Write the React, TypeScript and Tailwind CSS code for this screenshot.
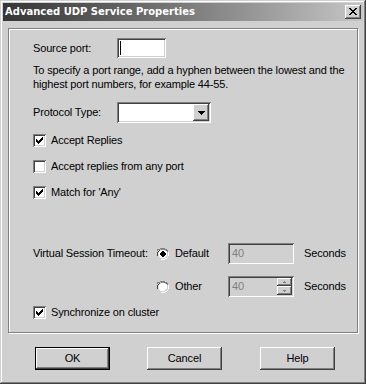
import React from "react";

const raised =
  "shadow-[inset_-1px_-1px_#404040,inset_1px_1px_#ffffff,inset_-2px_-2px_#808080,inset_2px_2px_#d0d0d0]";
const sunken =
  "shadow-[inset_1px_1px_#808080,inset_-1px_-1px_#ffffff,inset_2px_2px_#404040,inset_-2px_-2px_#d0d0d0]";

function CheckBox({ checked }: { checked: boolean }) {
  return (
    <div className={`w-[13px] h-[13px] bg-white shrink-0 relative ${sunken}`}>
      {checked && (
        <svg width="13" height="13" className="absolute left-0 top-0" shapeRendering="crispEdges">
          <rect x="3" y="5" width="1" height="3" fill="#000" />
          <rect x="4" y="6" width="1" height="3" fill="#000" />
          <rect x="5" y="7" width="1" height="3" fill="#000" />
          <rect x="6" y="6" width="1" height="3" fill="#000" />
          <rect x="7" y="5" width="1" height="3" fill="#000" />
          <rect x="8" y="4" width="1" height="3" fill="#000" />
          <rect x="9" y="3" width="1" height="3" fill="#000" />
        </svg>
      )}
    </div>
  );
}

function Radio({ checked }: { checked: boolean }) {
  return (
    <svg width="12" height="12" className="shrink-0" shapeRendering="crispEdges">
      <path d="M4 0h4v1h2v1h1v2h-1v-1h-1v-1h-2v-1h-4v1h-2v1h-1v1h-1v4h-1v-4h1v-2h1v-1h2z" fill="#808080" />
      <path d="M4 1h4v1h2v1h-2v-1h-4v1h-2v1h-1v4h-1v-4h1v-1h1v-1h1z" fill="#404040" />
      <circle cx="6" cy="6" r="4.5" fill="#ffffff" shapeRendering="auto" />
      <path d="M11 4h1v4h-1v2h-1v1h-2v1h-4v-1h4v-1h2v-1h1z" fill="#ffffff" />
      <path d="M10 4h1v4h-1v2h-2v1h-4v-1h4v-1h1v-1h1z" fill="#d0d0d0" />
      {checked && <rect x="4" y="4" width="4" height="4" fill="#000" />}
      {checked && <rect x="5" y="3" width="2" height="6" fill="#000" />}
      {checked && <rect x="3" y="5" width="6" height="2" fill="#000" />}
    </svg>
  );
}

export default function App() {
  const font = "font-['Liberation_Sans',Arial,sans-serif] text-[11px] tracking-[-0.15px] text-black";
  return (
    <div
      className={`w-[366px] h-[384px] bg-[#d0d0d0] p-[3px] flex flex-col ${font} shadow-[inset_-1px_-1px_#404040,inset_1px_1px_#d0d0d0,inset_-2px_-2px_#808080,inset_2px_2px_#ffffff]`}
    >
      {/* Title bar */}
      <div className="h-[18px] flex items-center justify-between pl-[2px] pr-[2px] bg-gradient-to-r from-[#363636] to-[#c6c6c6]">
        <span className="font-['DejaVu_Sans',sans-serif] font-bold text-[10px] tracking-normal text-white leading-none">
          Advanced UDP Service Properties
        </span>
        <div className={`w-[16px] h-[14px] bg-[#d0d0d0] relative ${raised}`}>
          <svg width="16" height="14" className="absolute left-0 top-0" shapeRendering="crispEdges">
            <rect x="4" y="3" width="2" height="1" fill="#000" />
            <rect x="10" y="3" width="2" height="1" fill="#000" />
            <rect x="5" y="4" width="2" height="1" fill="#000" />
            <rect x="9" y="4" width="2" height="1" fill="#000" />
            <rect x="6" y="5" width="4" height="1" fill="#000" />
            <rect x="7" y="6" width="2" height="1" fill="#000" />
            <rect x="6" y="7" width="4" height="1" fill="#000" />
            <rect x="5" y="8" width="2" height="1" fill="#000" />
            <rect x="9" y="8" width="2" height="1" fill="#000" />
            <rect x="4" y="9" width="2" height="1" fill="#000" />
            <rect x="10" y="9" width="2" height="1" fill="#000" />
          </svg>
        </div>
      </div>

      {/* Group box */}
      <div className="mt-[7px] ml-[5px] w-[350px] h-[305px] border border-[#808080] shadow-[inset_1px_1px_#ffffff,1px_1px_#ffffff] pl-[24px] flex flex-col">
        {/* Source port */}
        <div className="mt-[9px] flex items-center h-[20px]">
          <span className="w-[84px]">Source port:</span>
          <div className={`w-[49px] h-[20px] bg-white relative ${sunken}`}>
            <div className="absolute left-[3px] top-[3px] w-[1px] h-[14px] bg-black" />
          </div>
        </div>

        {/* Description */}
        <div className="mt-[5px] leading-[14px] whitespace-nowrap">
          <div>To specify a port range, add a hyphen between the lowest and the</div>
          <div>highest port numbers, for example 44-55.</div>
        </div>

        {/* Protocol type */}
        <div className="mt-[11px] flex items-center h-[21px]">
          <span className="w-[84px]">Protocol Type:</span>
          <div className={`w-[94px] h-[21px] bg-white relative flex justify-end p-[2px] ${sunken}`}>
            <div className={`w-[16px] h-[17px] bg-[#d0d0d0] flex items-center justify-center ${raised}`}>
              <svg width="7" height="4" shapeRendering="crispEdges">
                <path d="M0 0h7v1h-1v1h-1v1h-1v1h-1v-1h-1v-1h-1v-1h-1z" fill="#000" />
              </svg>
            </div>
          </div>
        </div>

        {/* Checkboxes */}
        <div className="mt-[11px] flex items-center h-[13px]">
          <CheckBox checked />
          <span className="ml-[5px]">Accept Replies</span>
        </div>
        <div className="mt-[13px] flex items-center h-[13px]">
          <CheckBox checked={false} />
          <span className="ml-[5px]">Accept replies from any port</span>
        </div>
        <div className="mt-[13px] flex items-center h-[13px]">
          <CheckBox checked />
          <span className="ml-[5px]">Match for 'Any'</span>
        </div>

        {/* Virtual session timeout */}
        <div className="mt-[44px] flex items-center h-[21px]">
          <span className="w-[124px]">Virtual Session Timeout:</span>
          <Radio checked />
          <span className="ml-[6px] w-[53px]">Default</span>
          <div className={`w-[66px] h-[21px] bg-[#d0d0d0] flex items-center pl-[4px] text-[#808080] ${sunken}`}>
            40
          </div>
          <span className="ml-[10px]">Seconds</span>
        </div>
        <div className="mt-[12px] flex items-center h-[21px]">
          <span className="w-[124px]" />
          <Radio checked={false} />
          <span className="ml-[6px] w-[53px]">Other</span>
          <div className={`w-[66px] h-[21px] bg-[#d0d0d0] flex items-center justify-between pl-[4px] pr-[2px] text-[#808080] ${sunken}`}>
            <span>40</span>
            <div className="flex flex-col">
              <div className={`w-[15px] h-[8px] bg-[#d0d0d0] flex items-center justify-center ${raised}`}>
                <svg width="3" height="2" shapeRendering="crispEdges">
                  <path d="M1 0h1v1h1v1h-3v-1h1z" fill="#808080" />
                </svg>
              </div>
              <div className={`w-[15px] h-[9px] bg-[#d0d0d0] flex items-center justify-center ${raised}`}>
                <svg width="3" height="2" shapeRendering="crispEdges">
                  <path d="M0 0h3v1h-1v1h-1v-1h-1z" fill="#808080" />
                </svg>
              </div>
            </div>
          </div>
          <span className="ml-[10px]">Seconds</span>
        </div>

        {/* Sync */}
        <div className="mt-[9px] flex items-center h-[13px]">
          <CheckBox checked />
          <span className="ml-[5px]">Synchronize on cluster</span>
        </div>
      </div>

      {/* Buttons */}
      <div className="mt-[14px] flex">
        <div className="ml-[32px] w-[75px] h-[23px] border border-black">
          <div className={`w-full h-full bg-[#d0d0d0] flex items-center justify-center ${raised}`}>OK</div>
        </div>
        <div className={`ml-[37px] w-[75px] h-[23px] bg-[#d0d0d0] flex items-center justify-center ${raised}`}>
          Cancel
        </div>
        <div className={`ml-[38px] w-[75px] h-[23px] bg-[#d0d0d0] flex items-center justify-center ${raised}`}>
          Help
        </div>
      </div>
    </div>
  );
}
